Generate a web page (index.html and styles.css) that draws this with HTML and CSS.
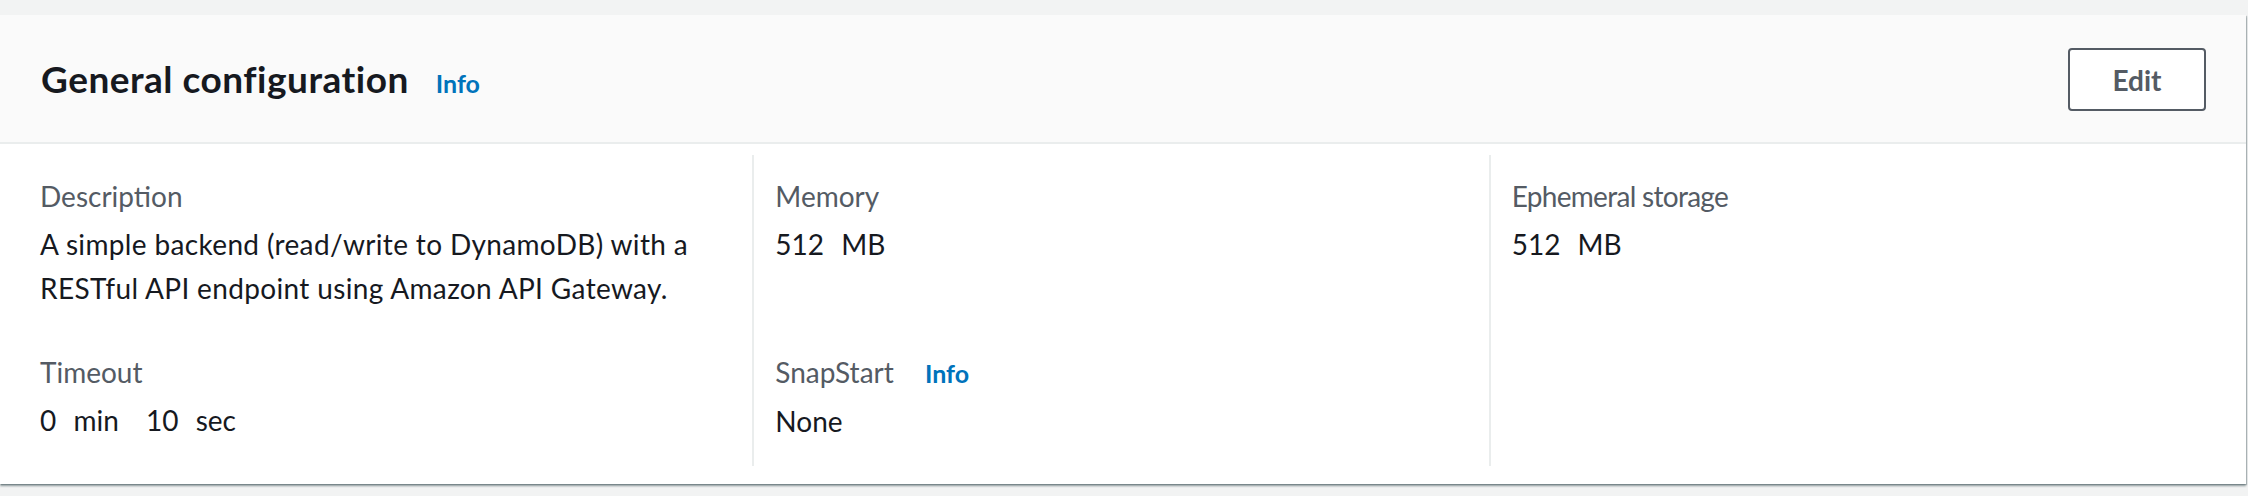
FILE: index.html
```html
<!DOCTYPE html>
<html lang="en">
<head>
<meta charset="utf-8">
<title>General configuration</title>
<link rel="stylesheet" href="styles.css">
</head>
<body>
<section class="card">
  <header class="card-header">
    <div class="title-wrap">
      <h2 class="title">General configuration</h2>
      <a class="info-link info-link-header" href="#">Info</a>
    </div>
    <button class="btn" type="button">Edit</button>
  </header>
  <div class="card-body">
    <div class="cell c1 r1">
      <div class="label">Description</div>
      <div class="value value-long">A simple backend (read/write to DynamoDB) with a RESTful API endpoint using Amazon API Gateway.</div>
    </div>
    <div class="cell c2 r1">
      <div class="label">Memory</div>
      <div class="value">512 <span class="unit">MB</span></div>
    </div>
    <div class="cell c3 r1">
      <div class="label label-narrow">Ephemeral storage</div>
      <div class="value">512 <span class="unit">MB</span></div>
    </div>
    <div class="cell c1 r2">
      <div class="label">Timeout</div>
      <div class="value">0 <span class="unit">min</span> <span class="group">10</span> <span class="unit">sec</span></div>
    </div>
    <div class="cell c2 r2">
      <div class="label">SnapStart <a class="info-link info-link-label" href="#">Info</a></div>
      <div class="value">None</div>
    </div>
    <div class="cell c3 r2"></div>
  </div>
</section>
</body>
</html>
```
FILE: styles.css
```css
html, body {
  margin: 0;
  padding: 0;
}
body {
  background: #f2f3f3;
  font-family: Lato, "Liberation Sans", sans-serif;
  color: #16191f;
  width: 2248px;
  height: 496px;
  overflow: hidden;
}
.card {
  margin: 15px 2px 0 0;
  background: #ffffff;
  box-shadow: 0 2px 2px 0 rgba(0, 28, 36, 0.4), 1px 1px 1px 0 rgba(0, 28, 36, 0.2);
}
.card-header {
  height: 127px;
  box-sizing: content-box;
  background: #fafafa;
  border-bottom: 2px solid #eaeded;
  display: flex;
  align-items: center;
  justify-content: space-between;
  padding: 0 40px 0 41px;
}
.title-wrap {
  display: flex;
  align-items: baseline;
  gap: 27px;
  padding-top: 0;
}
.title {
  margin: 0;
  font-size: 37px;
  font-weight: 700;
  color: #16191f;
  letter-spacing: 0.5px;
}
.info-link {
  color: #0073bb;
  font-weight: 700;
  text-decoration: none;
  font-size: 25px;
}
.btn {
  width: 138px;
  height: 63px;
  border: 2px solid #545b64;
  border-radius: 4px;
  background: #ffffff;
  color: #545b64;
  font-family: Lato, "Liberation Sans", sans-serif;
  font-size: 28px;
  font-weight: 700;
  padding: 0;
  margin-top: 2px;
}
.card-body {
  display: grid;
  grid-template-columns: repeat(3, 1fr);
  padding: 11px 21px 18px 16px;
}
.cell {
  padding-left: 24px;
  padding-right: 20px;
}
.c2, .c3 {
  border-left: 2px solid #eaeded;
  padding-left: 21px;
}
.r1 {
  padding-top: 19px;
  padding-bottom: 40px;
}
.r2 {
  padding-bottom: 23px;
}
.label {
  font-size: 28px;
  line-height: 44px;
  color: #545b64;
  margin-bottom: 4px;
}
.label-narrow {
  letter-spacing: -0.7px;
}
.value {
  font-size: 28px;
  line-height: 44px;
  color: #16191f;
}
.value-long {
  letter-spacing: 0.35px;
}
.unit {
  margin-left: 10px;
}
.group {
  margin-left: 20px;
}
.info-link-label {
  margin-left: 24px;
}
```
